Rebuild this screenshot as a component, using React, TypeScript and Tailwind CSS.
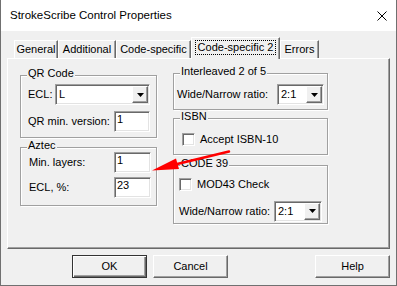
import React from "react";

// Classic Win32 property sheet: "StrokeScribe Control Properties"

const sunken =
  "border border-[#a0a0a0] border-r-white border-b-white shadow-[inset_1px_1px_0_#696969,inset_-1px_-1px_0_#e3e3e3]";
const raised =
  "border border-white border-r-[#696969] border-b-[#696969] shadow-[inset_-1px_-1px_0_#a0a0a0]";

function Group({ label, className, children }: { label: string; className?: string; children?: React.ReactNode }) {
  return (
    <div className={`relative border border-[#a0a0a0] shadow-[inset_1px_1px_0_#fff,1px_1px_0_#fff] ${className ?? ""}`}>
      <span className="absolute -top-[9px] left-[6px] bg-[#f0f0f0] px-[1px] leading-[13px]">{label}</span>
      {children}
    </div>
  );
}

function Combo({ value, className }: { value: string; className?: string }) {
  return (
    <div className={`${sunken} flex h-[21px] bg-white p-[1px] ${className ?? ""}`}>
      <div className="flex-1 pl-[2px] leading-[17px]">{value}</div>
      <div className={`${raised} flex h-full w-[16px] items-center justify-center bg-[#f0f0f0]`}>
        <svg width="7" height="4" viewBox="0 0 7 4">
          <path d="M0 0h7L3.5 4z" fill="#000" />
        </svg>
      </div>
    </div>
  );
}

function Edit({ value, className }: { value: string; className?: string }) {
  return <div className={`${sunken} h-[21px] bg-white px-[2px] leading-[15px] ${className ?? ""}`}>{value}</div>;
}

function Check({ label }: { label: string }) {
  return (
    <div className="flex items-center gap-[5px]">
      <div className={`${sunken} h-[13px] w-[13px] bg-white`} />
      <span>{label}</span>
    </div>
  );
}

const tabs = [
  { name: "General", w: "w-[44px]" },
  { name: "Additional", w: "w-[58px]" },
  { name: "Code-specific", w: "w-[75px]" },
];

export default function App() {
  return (
    <div className="relative flex h-[286px] w-[397px] flex-col border-x border-b border-[#707070] bg-[#f0f0f0] font-['Liberation_Sans',Arial,sans-serif] text-[11px] text-black">
      {/* Title bar */}
      <div className="flex h-[31px] items-center bg-white pl-[9px] pr-[9px] text-[11.5px]">
        <span>StrokeScribe Control Properties</span>
        <svg className="ml-auto" width="10" height="10" viewBox="0 0 10 10">
          <path d="M0.5 0.5L9.5 9.5M9.5 0.5L0.5 9.5" stroke="#000" strokeWidth="1" />
        </svg>
      </div>

      {/* Tabs */}
      <div className="relative z-10 ml-[13px] mt-[6px] flex h-[21px] items-end">
        {tabs.map((t) => (
          <div
            key={t.name}
            className={`${t.w} flex h-[18px] items-center justify-center border-l border-t border-white border-r border-r-[#696969] shadow-[inset_-1px_0_0_#a0a0a0]`}
          >
            {t.name}
          </div>
        ))}
        <div className="-mb-px flex h-[22px] w-[89px] items-start justify-center border-l border-t border-white border-r border-r-[#696969] bg-[#f0f0f0] pt-[2px] shadow-[inset_-1px_0_0_#a0a0a0]">
          <span className="border border-dotted border-black px-[2px] leading-[13px]">Code-specific 2</span>
        </div>
        <div className="flex h-[18px] w-[39px] items-center justify-center border-l border-t border-white border-r border-r-[#696969] shadow-[inset_-1px_0_0_#a0a0a0]">
          Errors
        </div>
      </div>

      {/* Tab page */}
      <div className="mx-[6px] flex h-[191px] items-start border border-white border-r-[#696969] border-b-[#696969] pl-[12px] pt-[14px] shadow-[inset_-1px_-1px_0_#a0a0a0]">
        <div className="mt-[2px] flex w-[137px] flex-col gap-[9px]">
          <Group label="QR Code" className="flex h-[63px] flex-col gap-[6px] pl-[7px] pr-[6px] pt-[8px]">
            <div className="flex items-center justify-between">
              <span>ECL:</span>
              <Combo value="L" className="w-[95px]" />
            </div>
            <div className="flex items-center justify-between">
              <span>QR min. version:</span>
              <Edit value="1" className="w-[36px]" />
            </div>
          </Group>
          <Group label="Aztec" className="flex h-[59px] flex-col gap-[4px] pl-[8px] pr-[5px] pt-[4px]">
            <div className="flex items-center justify-between">
              <span>Min. layers:</span>
              <Edit value="1" className="w-[37px]" />
            </div>
            <div className="flex items-center justify-between">
              <span>ECL, %:</span>
              <Edit value="23" className="w-[37px]" />
            </div>
          </Group>
        </div>

        <div className="ml-[16px] flex w-[155px] flex-col">
          <Group label="Interleaved 2 of 5" className="h-[37px] pl-[3px] pr-[3px] pt-[10px]">
            <div className="flex items-center justify-between">
              <span>Wide/Narrow ratio:</span>
              <Combo value="2:1" className="w-[47px]" />
            </div>
          </Group>
          <Group label="ISBN" className="mt-[8px] h-[37px] pl-[8px] pt-[12px]">
            <Check label="Accept ISBN-10" />
          </Group>
          <Group label="CODE 39" className="mt-[10px] flex h-[59px] flex-col gap-[8px] pl-[5px] pr-[5px] pt-[10px]">
            <Check label="MOD43 Check" />
            <div className="flex items-center justify-between">
              <span>Wide/Narrow ratio:</span>
              <Combo value="2:1" className="w-[48px]" />
            </div>
          </Group>
        </div>
      </div>

      {/* Buttons */}
      <div className="mt-[6px] flex gap-[6px] pl-[71px] pr-[6px]">
        <button className="flex h-[23px] w-[75px] items-center justify-center border border-[#333] shadow-[inset_1px_1px_0_#fff,inset_-1px_-1px_0_#696969,inset_-2px_-2px_0_#a0a0a0]">
          OK
        </button>
        <button className={`${raised} flex h-[23px] w-[75px] items-center justify-center`}>Cancel</button>
        <button className={`${raised} ml-auto flex h-[23px] w-[75px] items-center justify-center`}>Help</button>
      </div>

      {/* Red annotation arrow */}
      <svg className="pointer-events-none absolute left-0 top-0" width="397" height="286" viewBox="0 0 397 286">
        <path d="M228 151.5L172 165" stroke="#f00" strokeWidth="2.5" strokeLinecap="round" />
        <polygon points="151,170.5 175,158.5 178,169" fill="#f00" />
      </svg>
    </div>
  );
}
